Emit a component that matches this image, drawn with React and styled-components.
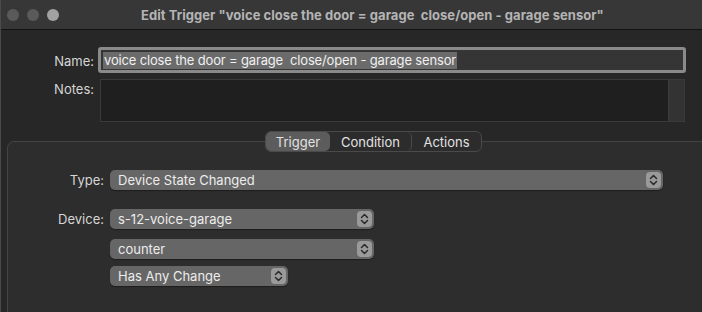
import React from "react";
import styled, { createGlobalStyle } from "styled-components";

const Global = createGlobalStyle`
  html, body {
    margin: 0;
    padding: 0;
    background: #262626;
    overflow: hidden;
  }
  body {
    font-family: Inter, "Liberation Sans", sans-serif;
    -webkit-font-smoothing: antialiased;
  }
`;

const Window = styled.div`
  width: 702px;
  height: 312px;
  overflow: hidden;
  background: #272727;
  border-left: 1px solid #4a4a4a;
  box-sizing: border-box;
  display: flex;
  flex-direction: column;
`;

const TitleBar = styled.div`
  height: 30px;
  flex: none;
  background: #373737;
  border-bottom: 1px solid #121212;
  box-sizing: border-box;
  display: flex;
  align-items: center;
`;

const Lights = styled.div`
  display: flex;
  gap: 8px;
  padding-left: 6px;
`;

const Light = styled.span`
  width: 12px;
  height: 12px;
  border-radius: 50%;
  background: ${(p) => p.color};
`;

const Title = styled.div`
  margin-left: 82px;
  color: #b4b4b4;
  font-size: 13px;
  font-weight: 700;
  white-space: pre;
  letter-spacing: 0.05px;
`;

const Body = styled.div`
  display: flex;
  flex-direction: column;
  padding-top: 17px;
`;

const FormGrid = styled.div`
  display: grid;
  grid-template-columns: 93px 588px;
  column-gap: 4px;
  row-gap: 6px;
  align-items: start;
`;

const Label = styled.div`
  text-align: right;
  color: #d6d6d6;
  font-size: 13px;
  line-height: 16px;
  padding-top: ${(p) => p.top || 0}px;
  margin-top: ${(p) => p.mt || 0}px;
`;

const NameField = styled.div`
  height: 26px;
  box-sizing: border-box;
  border: 3px solid #8a8a8a;
  border-radius: 3px;
  background: #353535;
  display: flex;
  align-items: center;
  padding-left: 2px;
`;

const Selected = styled.span`
  background: #6b6b6b;
  color: #f0f0f0;
  font-size: 13px;
  line-height: 17px;
  padding: 0 1px;
  white-space: pre;
  letter-spacing: -0.16px;
`;

const Notes = styled.div`
  height: 43px;
  margin-left: 2px;
  width: 585px;
  box-sizing: border-box;
  border: 1px solid #3a3a3a;
  background: #1f1f1f;
  display: flex;
  justify-content: flex-end;
`;

const Scroller = styled.div`
  width: 15px;
  background: #333333;
  border-left: 1px solid #3d3d3d;
`;

const TabRow = styled.div`
  display: flex;
  margin-top: 9px;
  margin-bottom: -11px;
  padding-left: 264px;
  position: relative;
  z-index: 1;
`;

const Segmented = styled.div`
  display: flex;
  align-items: center;
  height: 21px;
  box-sizing: border-box;
  border: 1px solid #4a4a4a;
  border-radius: 6px;
  background: #2c2c2c;
`;

const Tab = styled.div`
  width: ${(p) => p.w}px;
  height: 19px;
  display: flex;
  align-items: center;
  justify-content: center;
  color: #e2e2e2;
  font-size: 13px;
  border-radius: 5px;
  background: ${(p) => (p.active ? "#5c5c5c" : "transparent")};
  border-right: ${(p) => (p.divider ? "1px solid #4a4a4a" : "none")};
  box-sizing: border-box;
`;

const Group = styled.div`
  margin-left: 6px;
  width: 731px;
  flex: none;
  height: 200px;
  box-sizing: border-box;
  border: 1px solid #444444;
  border-radius: 7px;
  background: #2d2d2d;
  padding-top: 28px;
`;

const Rows = styled.div`
  display: grid;
  grid-template-columns: 96px auto;
  column-gap: 6px;
  align-items: center;
  justify-items: start;
`;

const Popup = styled.div`
  width: ${(p) => p.w}px;
  height: 20px;
  box-sizing: border-box;
  border-radius: 5px;
  background: #666666;
  box-shadow: 0 1px 1px rgba(0, 0, 0, 0.35);
  display: flex;
  align-items: center;
  justify-content: space-between;
  padding: 0 2px 0 8px;
  color: #ececec;
  font-size: 13px;
  margin-top: ${(p) => p.mt || 0}px;
`;

const Stepper = styled.div`
  width: 15px;
  height: 16px;
  border-radius: 4px;
  background: #9a9a9a;
  display: flex;
  align-items: center;
  justify-content: center;
`;

const Chevrons = () => (
  <svg width="9" height="12" viewBox="0 0 9 12">
    <path d="M1.5 4.5 L4.5 1.5 L7.5 4.5 M1.5 7.5 L4.5 10.5 L7.5 7.5" fill="none" stroke="#2a2a2a" strokeWidth="1.5" strokeLinecap="round" strokeLinejoin="round" />
  </svg>
);

function Select({ w, mt, children }) {
  return (
    <Popup w={w} mt={mt}>
      <span>{children}</span>
      <Stepper>
        <Chevrons />
      </Stepper>
    </Popup>
  );
}

export default function App() {
  return (
    <>
      <Global />
      <Window>
        <TitleBar>
          <Lights>
            <Light color="#5a5a5a" />
            <Light color="#5a5a5a" />
            <Light color="#a2a2a2" />
          </Lights>
          <Title>Edit Trigger "voice close the door = garage  close/open - garage sensor"</Title>
        </TitleBar>
        <Body>
          <FormGrid>
            <Label top={6}>Name:</Label>
            <NameField>
              <Selected>voice close the door = garage  close/open - garage sensor</Selected>
            </NameField>
            <Label top={2}>Notes:</Label>
            <Notes>
              <Scroller />
            </Notes>
          </FormGrid>
          <TabRow>
            <Segmented>
              <Tab w={64} active>Trigger</Tab>
              <Tab w={82} divider>Condition</Tab>
              <Tab w={69}>Actions</Tab>
            </Segmented>
          </TabRow>
          <Group>
            <Rows>
              <Label style={{ justifySelf: "end" }}>Type:</Label>
              <Select w={553}>Device State Changed</Select>
              <Label style={{ justifySelf: "end" }} mt={19}>Device:</Label>
              <Select w={264} mt={19}>s-12-voice-garage</Select>
              <span />
              <Select w={264} mt={10}>counter</Select>
              <span />
              <Select w={178} mt={7}>Has Any Change</Select>
            </Rows>
          </Group>
        </Body>
      </Window>
    </>
  );
}
